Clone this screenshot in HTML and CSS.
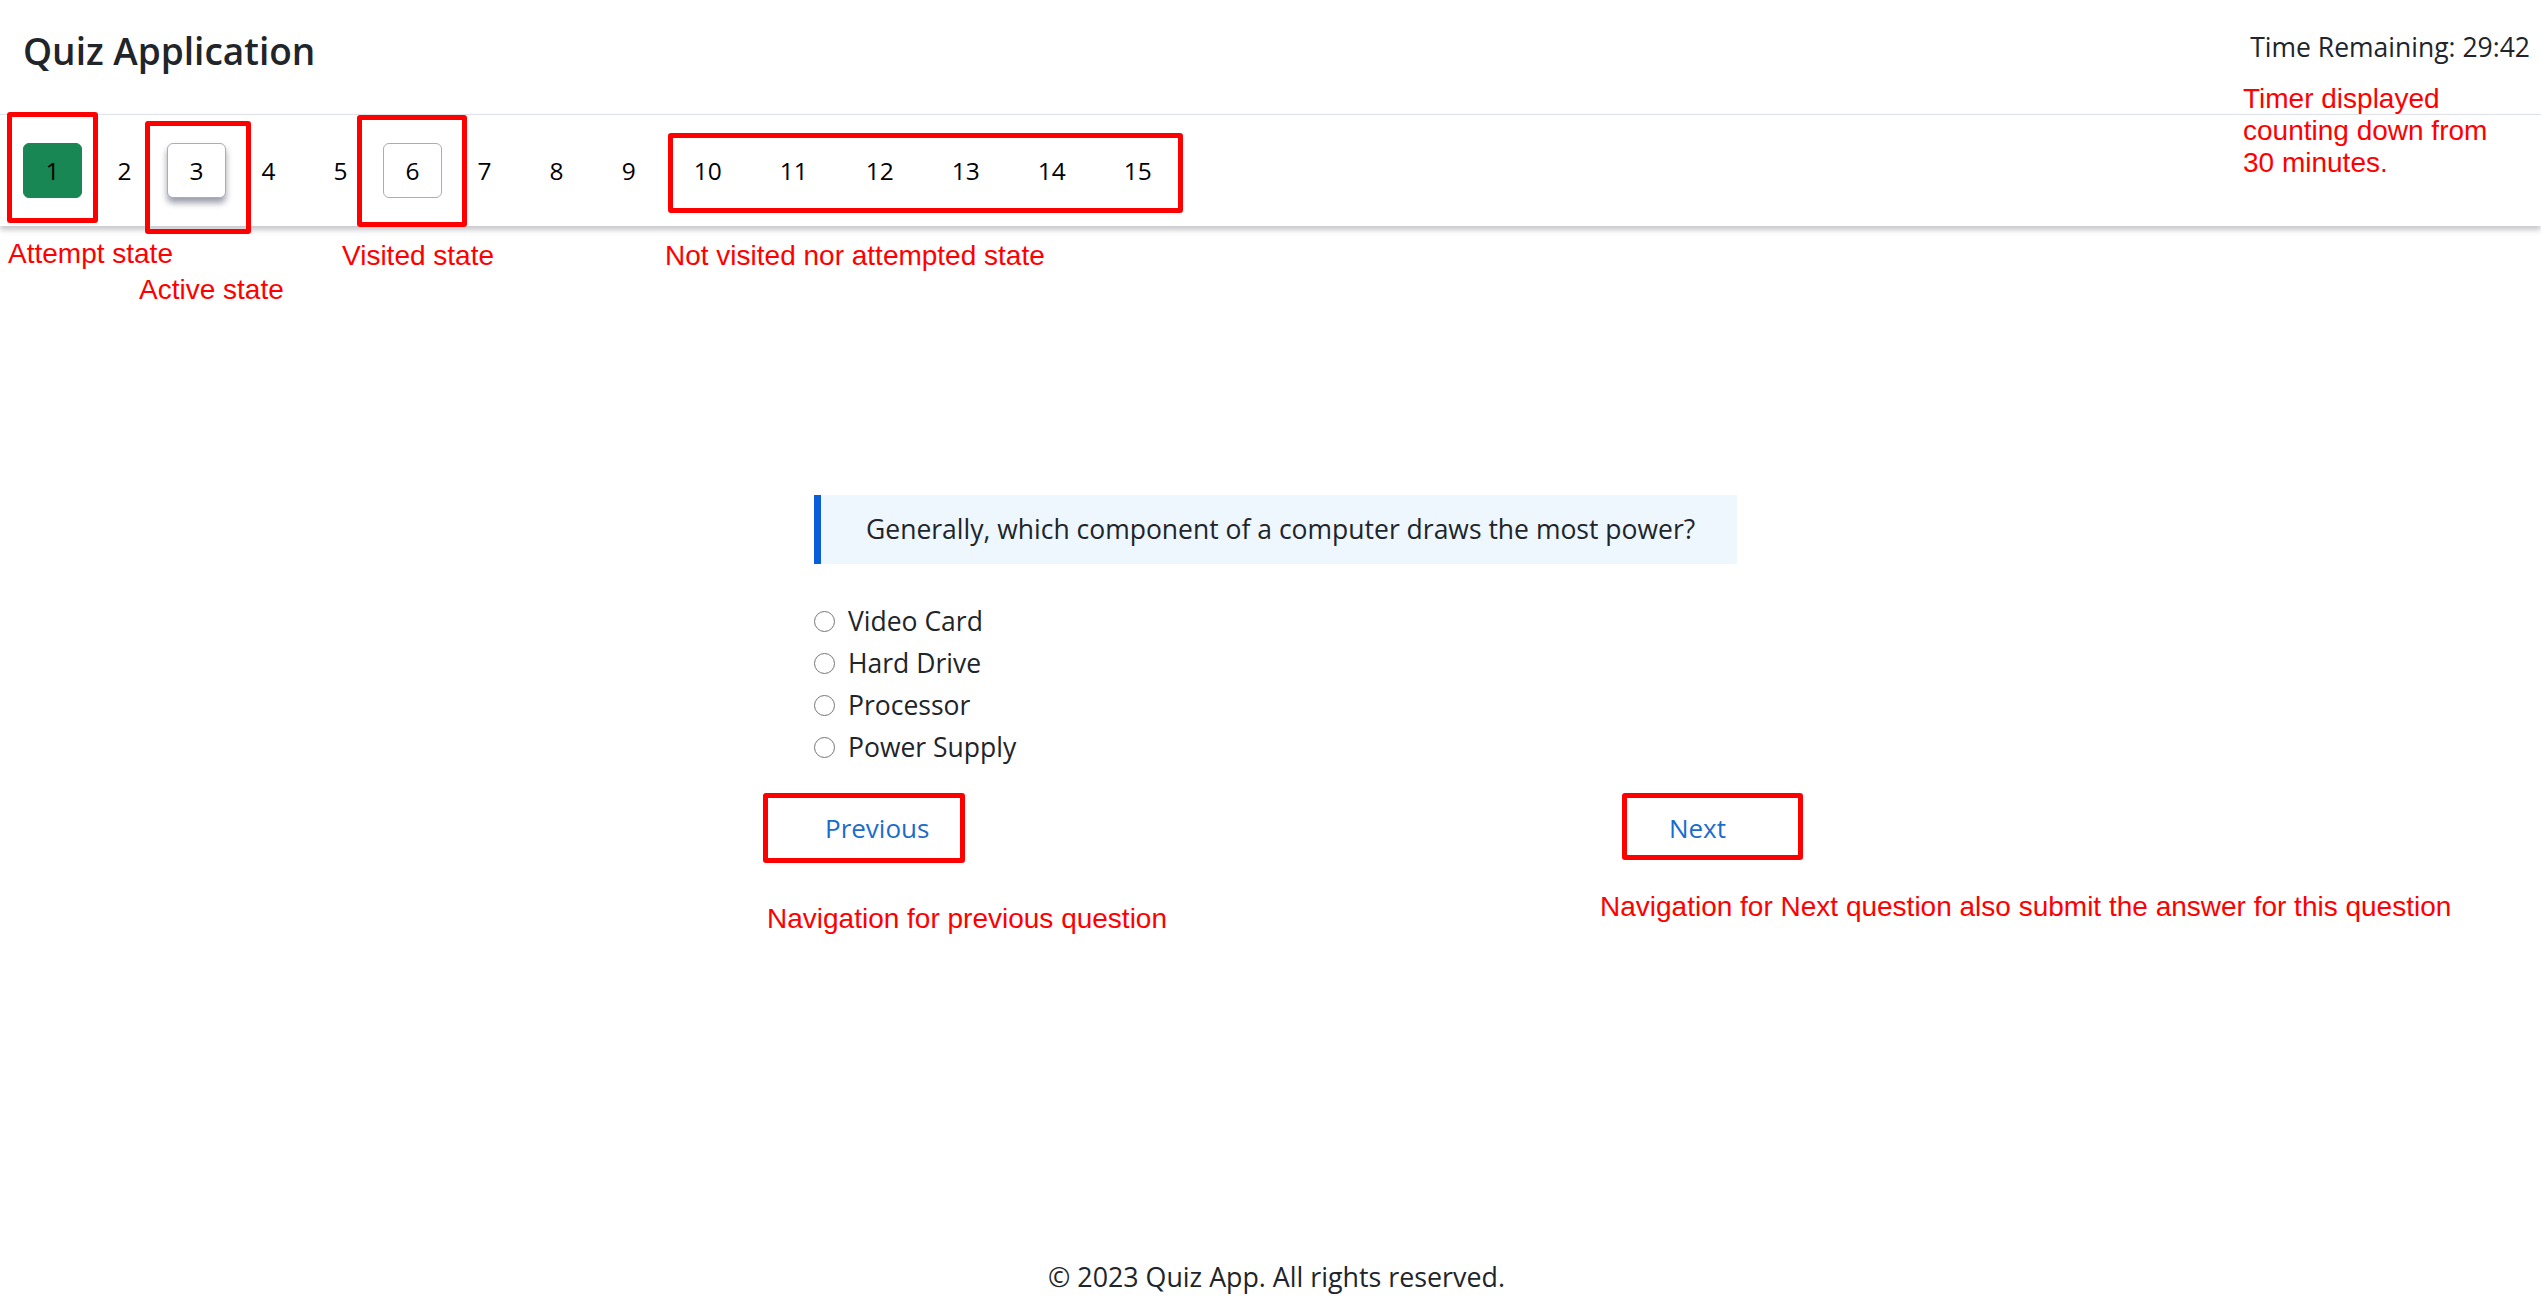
FILE: index.html
```html
<!DOCTYPE html>
<html lang="en">
<head>
<meta charset="utf-8">
<title>Quiz Application</title>
<link rel="stylesheet" href="styles.css">
</head>
<body>
<div class="page">
  <header class="topbar">
    <h1 class="title">Quiz Application</h1>
    <div class="timer">Time Remaining: 29:42</div>
  </header>
  <nav class="qnav">
    <span class="qitem attempted">1</span>
    <span class="qitem">2</span>
    <span class="qitem active">3</span>
    <span class="qitem">4</span>
    <span class="qitem">5</span>
    <span class="qitem visited">6</span>
    <span class="qitem">7</span>
    <span class="qitem">8</span>
    <span class="qitem">9</span>
    <span class="qitem">10</span>
    <span class="qitem">11</span>
    <span class="qitem">12</span>
    <span class="qitem">13</span>
    <span class="qitem">14</span>
    <span class="qitem">15</span>
  </nav>
  <main class="main">
    <div class="quiz">
      <div class="question">Generally, which component of a computer draws the most power?</div>
      <ul class="options">
        <li class="option"><input type="radio" name="ans" class="radio" id="o1"><label for="o1">Video Card</label></li>
        <li class="option"><input type="radio" name="ans" class="radio" id="o2"><label for="o2">Hard Drive</label></li>
        <li class="option"><input type="radio" name="ans" class="radio" id="o3"><label for="o3">Processor</label></li>
        <li class="option"><input type="radio" name="ans" class="radio" id="o4"><label for="o4">Power Supply</label></li>
      </ul>
      <div class="btn-row">
        <button class="btn-link prev">Previous</button>
        <button class="btn-link next">Next</button>
      </div>
    </div>
  </main>
  <footer class="footer">© 2023 Quiz App. All rights reserved.</footer>

  <div class="note-box nb-attempt"></div>
  <div class="note-box nb-active"></div>
  <div class="note-box nb-visited"></div>
  <div class="note-box nb-notvisited"></div>
  <div class="note-box nb-prev"></div>
  <div class="note-box nb-next"></div>

  <div class="note nt-attempt">Attempt state</div>
  <div class="note nt-active">Active state</div>
  <div class="note nt-visited">Visited state</div>
  <div class="note nt-notvisited">Not visited nor attempted state</div>
  <div class="note nt-timer">Timer displayed<br>counting down from<br>30 minutes.</div>
  <div class="note nt-prev">Navigation for previous question</div>
  <div class="note nt-next">Navigation for Next question also submit the answer for this question</div>
</div>
</body>
</html>
```

FILE: styles.css
```css
* { box-sizing: border-box; }
html, body { margin: 0; padding: 0; background: #fff; }
body {
  font-family: "Open Sans", "Noto Sans", sans-serif;
  color: #212529;
}
.page {
  position: relative;
  min-height: 1316px;
  display: flex;
  flex-direction: column;
}
.topbar {
  height: 114px;
  display: flex;
  justify-content: space-between;
  align-items: flex-start;
  padding: 29px 11px 0 23px;
}
.title {
  margin: 0;
  font-size: 37px;
  line-height: 43px;
  font-weight: 600;
  color: #212529;
}
.timer {
  font-size: 26.5px;
  line-height: 37px;
}
.qnav {
  height: 112px;
  border-top: 1px solid #dfe2e6;
  box-shadow: 0 4px 5px rgba(60, 60, 80, 0.28);
  display: flex;
  align-items: center;
  padding-left: 23px;
  gap: 13px;
  background: #fff;
}
.qitem {
  height: 55px;
  padding: 0 21.5px;
  border: 1px solid transparent;
  border-radius: 6px;
  font-size: 24.5px;
  line-height: 53px;
  color: #000;
}
.qitem.attempted {
  background: #198754;
  border-color: #198754;
}
.qitem.active {
  background: #fff;
  border-color: #a9adb5;
  box-shadow: 0 5px 6px rgba(40, 40, 70, 0.45);
}
.qitem.visited {
  background: #fff;
  border-color: #a9adb5;
}
.main {
  padding-top: 269px;
  padding-left: 25px;
}
.quiz {
  width: 1040px;
  margin: 0 auto;
}
.question {
  margin-left: 51px;
  width: 923px;
  height: 69px;
  border-left: 7px solid #0b5ed7;
  background: #eef6fe;
  padding-left: 45px;
  font-size: 26.5px;
  line-height: 69px;
}
.options {
  list-style: none;
  margin: 36px 0 0 51px;
  padding: 0;
}
.option {
  height: 42px;
  display: flex;
  align-items: center;
  font-size: 26.5px;
}
.radio {
  appearance: none;
  -webkit-appearance: none;
  margin: 0 13px 0 0;
  width: 21px;
  height: 21px;
  border: 1.5px solid #767676;
  border-radius: 50%;
  background: #fff;
}
.btn-row {
  margin-top: 25px;
  height: 70px;
  display: flex;
  justify-content: space-between;
  align-items: center;
}
.btn-link {
  font-family: "Open Sans", "Noto Sans", sans-serif;
  font-size: 26px;
  color: #1a6dcc;
  background: transparent;
  border: none;
  padding: 10px 20px;
  cursor: pointer;
}
.btn-link.prev { margin-left: 42px; }
.btn-link.next { margin-right: 57px; }
.footer {
  margin-top: auto;
  text-align: center;
  padding: 0 0 20px 12px;
  font-size: 26.8px;
  line-height: 38px;
}

/* annotations overlay */
.note-box {
  position: absolute;
  border: 5px solid #ff0000;
  border-radius: 3px;
}
.nb-attempt { left: 7px; top: 112px; width: 91px; height: 111px; }
.nb-active { left: 145px; top: 121px; width: 106px; height: 113px; }
.nb-visited { left: 357px; top: 115px; width: 110px; height: 112px; }
.nb-notvisited { left: 668px; top: 133px; width: 515px; height: 80px; }
.nb-prev { left: 763px; top: 793px; width: 202px; height: 70px; }
.nb-next { left: 1622px; top: 793px; width: 181px; height: 67px; }

.note {
  position: absolute;
  font-family: "Liberation Sans", Arial, sans-serif;
  font-size: 28px;
  line-height: 31px;
  color: #ff0000;
  white-space: nowrap;
}
.nt-attempt { left: 8px; top: 238px; }
.nt-active { left: 139px; top: 274px; }
.nt-visited { left: 342px; top: 240px; }
.nt-notvisited { left: 665px; top: 240px; }
.nt-timer { left: 2243px; top: 83px; line-height: 32px; }
.nt-prev { left: 767px; top: 903px; }
.nt-next { left: 1600px; top: 891px; }
```
